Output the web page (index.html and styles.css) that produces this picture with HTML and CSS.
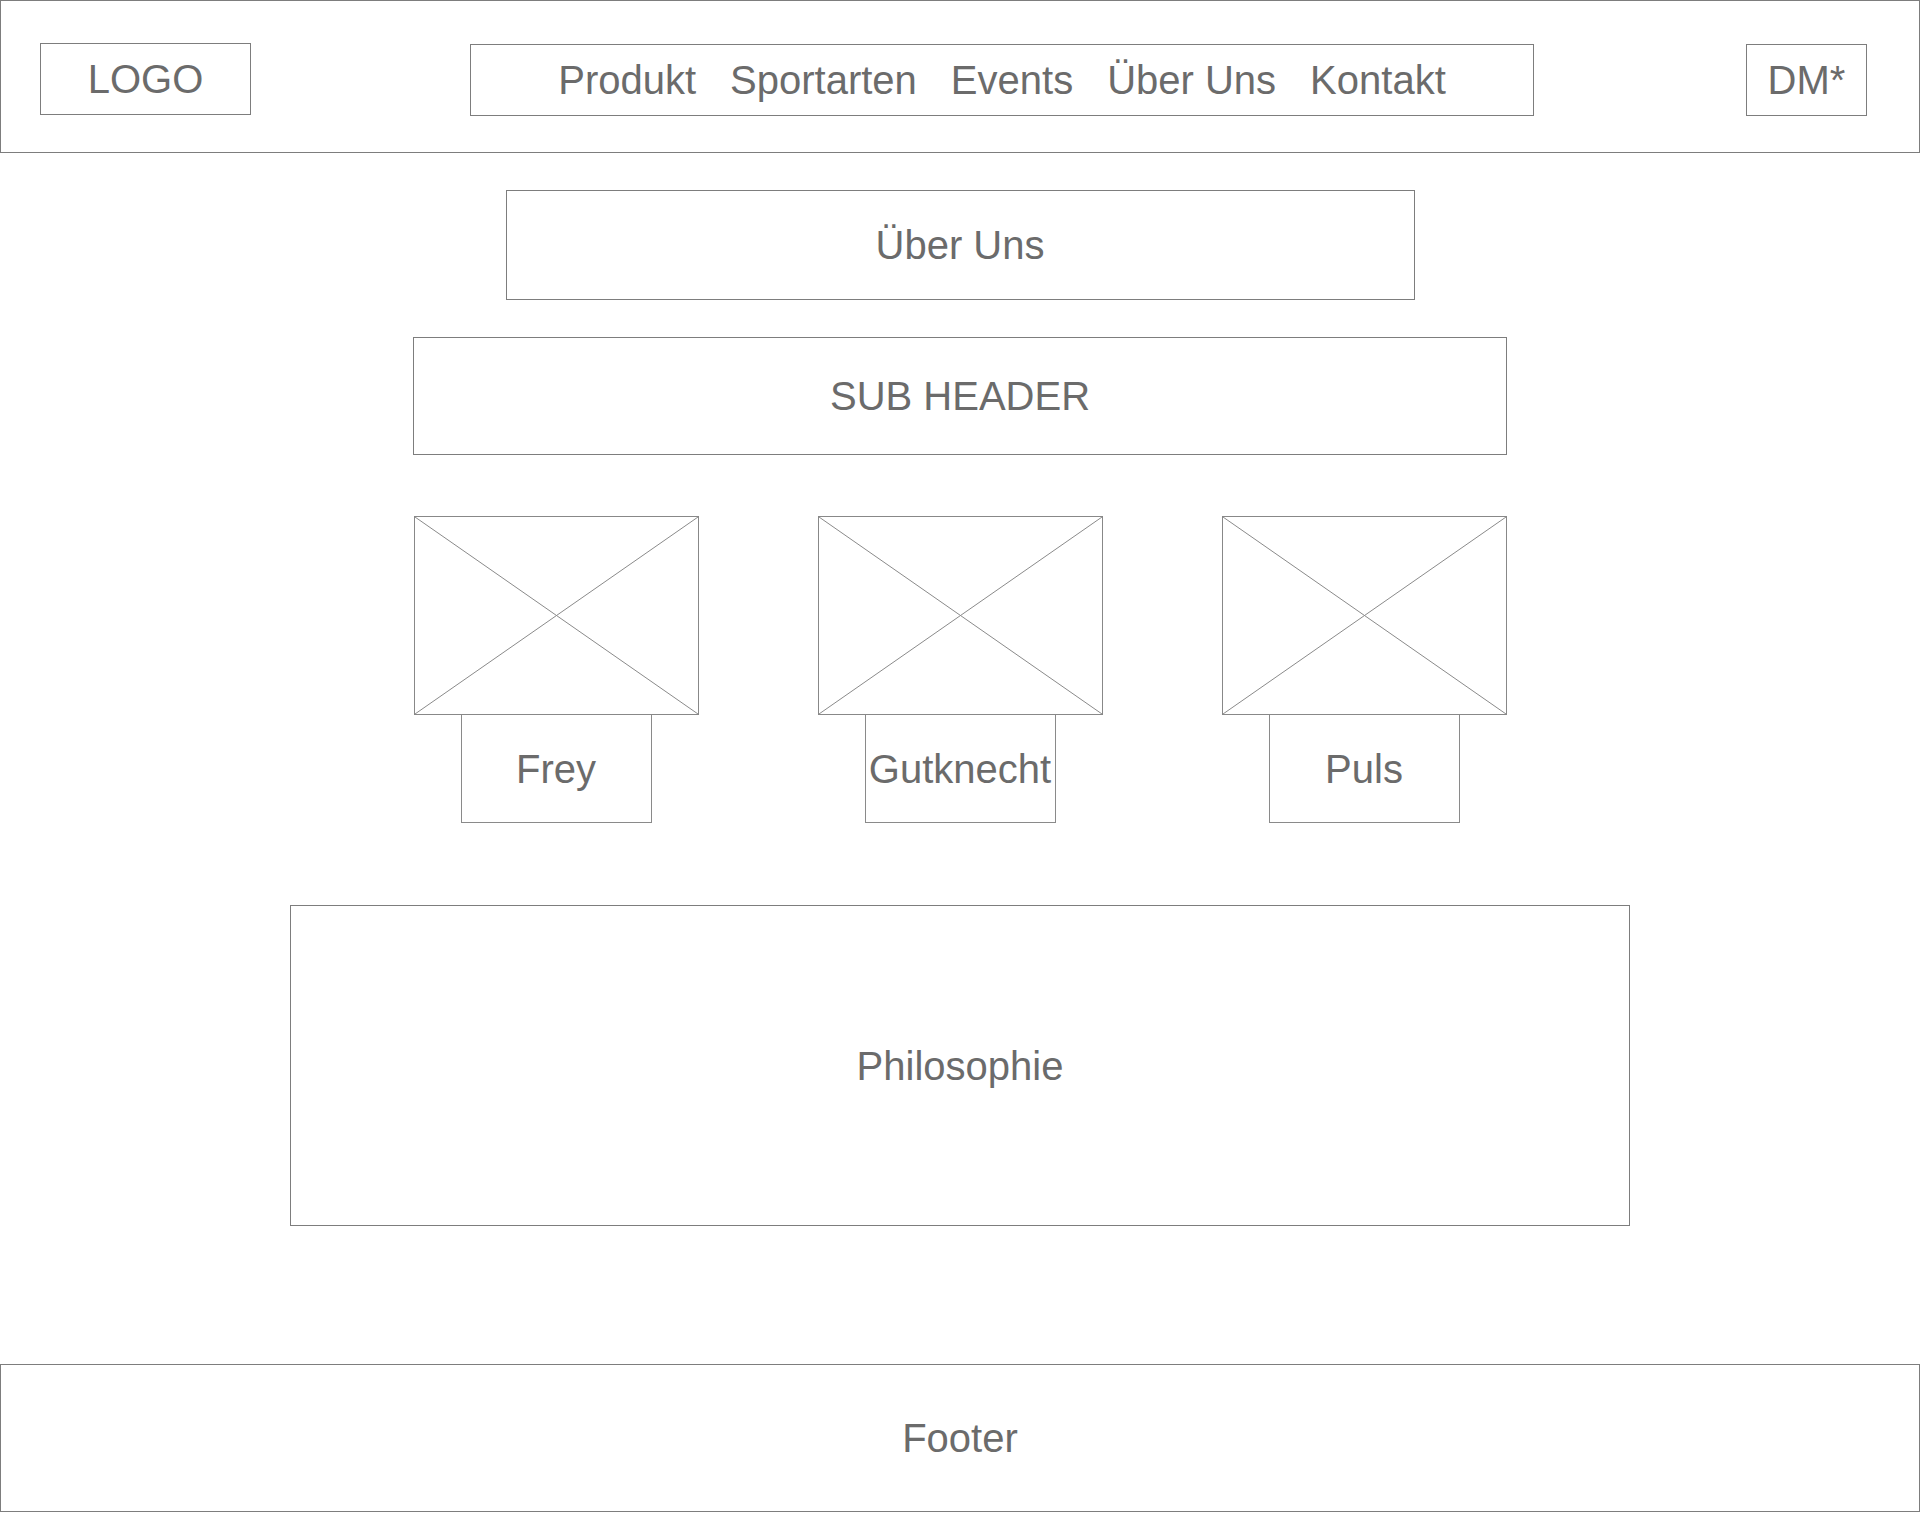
FILE: index.html
```html
<!DOCTYPE html>
<html lang="de">
<head>
  <meta charset="UTF-8">
  <meta name="viewport" content="width=device-width, initial-scale=1.0">
  <title>Über Uns</title>
  <link rel="stylesheet" href="styles.css">
</head>
<body>
  <header class="site-header">
    <div class="box logo">LOGO</div>
    <nav class="box main-nav">
      <a href="#">Produkt</a>
      <a href="#">Sportarten</a>
      <a href="#">Events</a>
      <a href="#">Über Uns</a>
      <a href="#">Kontakt</a>
    </nav>
    <div class="box account">DM*</div>
  </header>

  <main class="content">
    <h1 class="box page-title">Über Uns</h1>
    <h2 class="box sub-header">SUB HEADER</h2>

    <section class="team">
      <div class="member">
        <div class="placeholder">
          <svg viewBox="0 0 100 100" preserveAspectRatio="none">
            <line x1="0" y1="0" x2="100" y2="100" vector-effect="non-scaling-stroke"/>
            <line x1="100" y1="0" x2="0" y2="100" vector-effect="non-scaling-stroke"/>
          </svg>
        </div>
        <div class="box member-name">Frey</div>
      </div>
      <div class="member">
        <div class="placeholder">
          <svg viewBox="0 0 100 100" preserveAspectRatio="none">
            <line x1="0" y1="0" x2="100" y2="100" vector-effect="non-scaling-stroke"/>
            <line x1="100" y1="0" x2="0" y2="100" vector-effect="non-scaling-stroke"/>
          </svg>
        </div>
        <div class="box member-name">Gutknecht</div>
      </div>
      <div class="member">
        <div class="placeholder">
          <svg viewBox="0 0 100 100" preserveAspectRatio="none">
            <line x1="0" y1="0" x2="100" y2="100" vector-effect="non-scaling-stroke"/>
            <line x1="100" y1="0" x2="0" y2="100" vector-effect="non-scaling-stroke"/>
          </svg>
        </div>
        <div class="box member-name">Puls</div>
      </div>
    </section>

    <section class="box philosophy">Philosophie</section>
  </main>

  <footer class="box site-footer">Footer</footer>
</body>
</html>
```

FILE: styles.css
```css
/* Global Styles */
* {
  margin: 0;
  padding: 0;
  box-sizing: border-box;
}

body {
  width: 1920px;
  min-height: 1513px;
  background: #fff;
  color: #6b6b6b;
  font-family: "Liberation Sans", Arial, sans-serif;
  font-size: 40px;
  font-weight: normal;
}

/* every wireframe block */
.box {
  display: flex;
  justify-content: center;
  align-items: center;
  border: 1px solid #7d7d7d;
  font-size: 40px;
  font-weight: normal;
  line-height: 1;
  white-space: nowrap;
}

/* Header */
.site-header {
  display: flex;
  align-items: flex-start;
  height: 153px;
  padding-top: 42px;
  border: 1px solid #7d7d7d;
}

.logo {
  width: 211px;
  height: 72px;
  margin-left: 39px;
}

.main-nav {
  width: 1064px;
  height: 72px;
  margin-left: 219px;
  margin-top: 1px;
  gap: 34px;
}

.main-nav a {
  color: inherit;
  text-decoration: none;
}

.account {
  width: 121px;
  height: 72px;
  margin-top: 1px;
  margin-left: auto;
  margin-right: 52px;
}

/* Main content */
.content {
  display: flex;
  flex-direction: column;
  align-items: center;
}

.page-title {
  width: 909px;
  height: 110px;
  margin-top: 37px;
}

.sub-header {
  width: 1094px;
  height: 118px;
  margin-top: 37px;
}

.team {
  display: flex;
  gap: 119px;
  margin-top: 61px;
}

.member {
  display: flex;
  flex-direction: column;
  align-items: center;
}

.placeholder {
  width: 285px;
  height: 199px;
  border: 1px solid #888;
}

.placeholder svg {
  display: block;
  width: 100%;
  height: 100%;
}

.placeholder line {
  stroke: #8a8a8a;
  stroke-width: 1;
}

.member-name {
  width: 191px;
  height: 108px;
  border-top: none;
  border-color: #8a8a8a;
}

.philosophy {
  width: 1340px;
  height: 321px;
  margin-top: 82px;
}

/* Footer */
.site-footer {
  width: 1920px;
  height: 148px;
  margin-top: 138px;
}
```
